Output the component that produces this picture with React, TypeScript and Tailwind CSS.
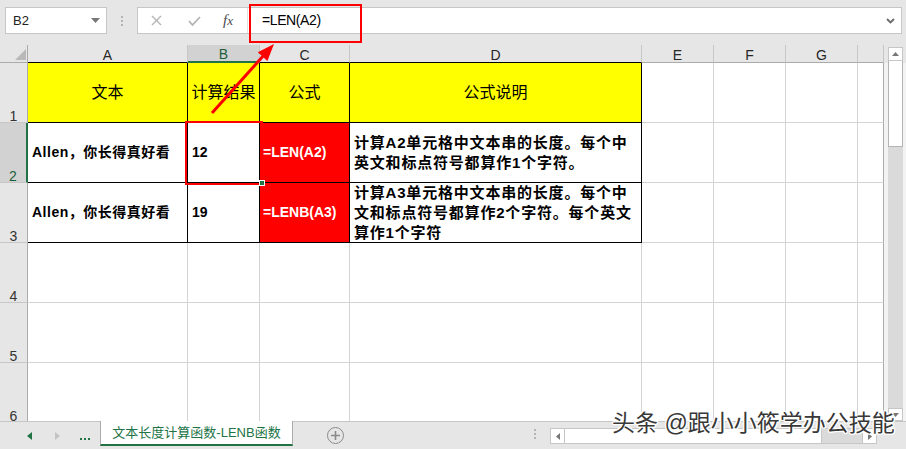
import React from 'react';

const base = "font-['Liberation_Sans','Noto_Sans_CJK_SC',sans-serif]";
const grid = 'border-r border-b border-[#d4d4d4]';
const blk = 'border-r border-b border-black';

function FormulaBar() {
  return (
    <div className="flex h-[45px] items-start pt-[7px] pl-[5px] pr-[4px]">
      {/* Name box */}
      <div className="flex h-[27px] w-[102px] items-center justify-between border border-[#c6c6c6] bg-white pl-[7px] pr-[6px]">
        <span className="text-[13px] text-[#222]">B2</span>
        <svg width="9" height="5" viewBox="0 0 9 5">
          <polygon points="0,0 9,0 4.5,5" fill="#777" />
        </svg>
      </div>
      {/* dots */}
      <div className="flex h-[27px] w-[30px] flex-col items-center justify-center gap-[2px]">
        <div className="h-[2px] w-[2px] bg-[#b4b4b4]" />
        <div className="h-[2px] w-[2px] bg-[#b4b4b4]" />
        <div className="h-[2px] w-[2px] bg-[#b4b4b4]" />
      </div>
      {/* Formula box */}
      <div className="flex h-[27px] flex-1 items-center border border-[#c6c6c6] bg-white">
        <div className="flex h-full w-[110px] items-center border-r border-[#e2e2e2]">
          <svg className="ml-[13px]" width="11" height="11" viewBox="0 0 11 11">
            <path d="M1 1 L10 10 M10 1 L1 10" stroke="#b4b4b4" strokeWidth="1.4" />
          </svg>
          <svg className="ml-[26px]" width="13" height="10" viewBox="0 0 13 10">
            <path d="M1 5 L4.5 9 L12 1" stroke="#b4b4b4" strokeWidth="1.8" fill="none" />
          </svg>
          <span className="ml-[22px] font-['Liberation_Serif',serif] text-[15px] italic text-[#4a4a4a]">
            f<span className="text-[13px]">x</span>
          </span>
        </div>
        <span className="ml-[14px] text-[14px] tracking-[-0.4px] text-black">=LEN(A2)</span>
        <div className="flex-1" />
        <svg className="mr-[6px]" width="9" height="6" viewBox="0 0 9 6">
          <path d="M1 1 L4.5 4.5 L8 1" stroke="#6a6a6a" strokeWidth="1.8" fill="none" />
        </svg>
      </div>
    </div>
  );
}

function Sheet() {
  const colHead = 'flex items-center justify-center bg-[#e6e6e6] pt-[3px] text-[14px] text-[#262626] border-r border-b border-r-[#c6c6c6]';
  const rowHead = 'flex items-end justify-center bg-[#e6e6e6] pb-[1px] text-[14px] leading-[10px] text-[#333] border-r border-b border-r-[#ababab] border-b-[#c6c6c6]';
  const empty = (n: number, last: boolean) =>
    Array.from({ length: n }).map((_, i) => (
      <div key={i} className={i === n - 1 && last ? 'border-r border-b border-[#d4d4d4] border-r-[#ababab]' : grid} />
    ));
  return (
    <div className="h-[376px] w-[884px] overflow-hidden">
      <div className="grid grid-cols-[28px_160px_72px_90px_292px_72px_72px_72px_26px] grid-rows-[18px_60px_60px_60px_60px_60px_60px] bg-white">
        {/* column headers */}
        <div className="relative border-r border-b border-[#ababab] bg-[#e6e6e6]">
          <svg className="absolute left-[15px] top-[4px]" width="11" height="11" viewBox="0 0 11 11">
            <polygon points="11,0 11,11 0,11" fill="#b9b9b9" />
          </svg>
        </div>
        <div className={`${colHead} border-b-black`}>A</div>
        <div className="flex items-center justify-center border-r border-r-[#c6c6c6] border-b-2 border-b-[#217346] bg-[#d2d2d2] pt-[3px] text-[14px] text-[#1d5e3a]">B</div>
        <div className={`${colHead} border-b-black`}>C</div>
        <div className={`${colHead} border-b-black`}>D</div>
        <div className={`${colHead} border-b-[#ababab]`}>E</div>
        <div className={`${colHead} border-b-[#ababab]`}>F</div>
        <div className={`${colHead} border-b-[#ababab]`}>G</div>
        <div className={`${colHead} border-b-[#ababab]`} />

        {/* row 1 */}
        <div className={rowHead}>1</div>
        <div className={`${blk} flex items-center justify-center bg-[#ffff00] text-[16px]`}>文本</div>
        <div className={`${blk} flex items-center justify-center whitespace-nowrap bg-[#ffff00] text-[16px]`}>计算结果</div>
        <div className={`${blk} flex items-center justify-center bg-[#ffff00] text-[16px]`}>公式</div>
        <div className={`${blk} flex items-center justify-center bg-[#ffff00] text-[16px]`}>公式说明</div>
        {empty(4, true)}

        {/* row 2 */}
        <div className="flex items-end justify-center border-r-2 border-b border-r-[#217346] border-b-[#c6c6c6] bg-[#d2d2d2] pb-[1px] text-[14px] leading-[10px] text-[#1d5e3a]">2</div>
        <div className={`${blk} flex items-center whitespace-nowrap pl-[4px] text-[14px] font-bold tracking-[0.5px]`}>Allen，你长得真好看</div>
        <div className={`${blk} flex items-center pl-[4px] text-[14px] font-bold`}>12</div>
        <div className={`${blk} flex items-center bg-[#ff0000] pl-[3px] text-[14px] font-bold text-white`}>=LEN(A2)</div>
        <div className={`${blk} flex items-center pl-[4px]`}>
          <p className="w-[284px] text-[15px] leading-[20px] font-bold tracking-[0.8px]">
            计算A2单元格中文本串的长度。每个中英文和标点符号都算作1个字符。
          </p>
        </div>
        {empty(4, true)}

        {/* row 3 */}
        <div className={rowHead}>3</div>
        <div className={`${blk} flex items-center whitespace-nowrap pl-[4px] text-[14px] font-bold tracking-[0.5px]`}>Allen，你长得真好看</div>
        <div className={`${blk} flex items-center pl-[4px] text-[14px] font-bold`}>19</div>
        <div className={`${blk} flex items-center bg-[#ff0000] pl-[3px] text-[14px] font-bold text-white`}>=LENB(A3)</div>
        <div className={`${blk} flex items-start pl-[4px]`}>
          <p className="w-[284px] text-[15px] leading-[20px] font-bold tracking-[0.8px]">
            计算A3单元格中文本串的长度。每个中文和标点符号都算作2个字符。每个英文算作1个字符
          </p>
        </div>
        {empty(4, true)}

        {/* rows 4-6 */}
        {['4', '5', '6'].map((n) => (
          <React.Fragment key={n}>
            <div className={rowHead}>{n}</div>
            {empty(8, true)}
          </React.Fragment>
        ))}
      </div>
    </div>
  );
}

function VScroll() {
  return (
    <div className="flex h-[376px] w-[22px] flex-col">
      <div className="h-[18px] bg-[#e6e6e6]" />
      <div className="flex flex-1 bg-[#f3f3f3] pl-[4px] pr-[3px]">
        <div className="-mt-[16px] flex w-[15px] flex-col">
          <div className="flex h-[14px] items-center justify-center border border-[#c6c6c6] bg-white">
            <svg width="7" height="4" viewBox="0 0 7 4"><polygon points="0,4 7,4 3.5,0" fill="#777" /></svg>
          </div>
          <div className="h-[86px] border border-t-0 border-[#b4b4b4] bg-white" />
          <div className="flex-1 bg-[#dadada]" />
          <div className="flex h-[13px] items-center justify-center border border-[#c6c6c6] bg-white">
            <svg width="7" height="4" viewBox="0 0 7 4"><polygon points="0,0 7,0 3.5,4" fill="#777" /></svg>
          </div>
        </div>
      </div>
    </div>
  );
}

function SheetTabs() {
  return (
    <div className="flex h-[28px] items-start border-t border-[#c6c6c6]">
      <div className="flex h-[27px] items-center pl-[15px]">
        <div className="flex w-[28px] justify-center">
          <svg width="5" height="8" viewBox="0 0 5 8"><polygon points="5,0 5,8 0,4" fill="#217346" /></svg>
        </div>
        <div className="flex w-[28px] justify-center">
          <svg width="5" height="8" viewBox="0 0 5 8"><polygon points="0,0 0,8 5,4" fill="#c3c3c3" /></svg>
        </div>
        <div className="flex w-[28px] justify-center gap-[2px] pt-[6px]">
          <div className="h-[2px] w-[2px] bg-[#217346]" />
          <div className="h-[2px] w-[2px] bg-[#217346]" />
          <div className="h-[2px] w-[2px] bg-[#217346]" />
        </div>
      </div>
      <div className="-mt-px ml-px flex h-[25px] w-[193px] items-center justify-center border-x border-b-2 border-x-[#ababab] border-b-[#217346] bg-white text-[13px] text-[#217346]">
        文本长度计算函数-LENB函数
      </div>
      <div className="ml-[34px] mt-[5px] flex h-[17px] w-[17px] items-center justify-center rounded-full border-[1.5px] border-[#8a8a8a]">
        <svg width="9" height="9" viewBox="0 0 9 9"><path d="M4.5 0 V9 M0 4.5 H9" stroke="#8a8a8a" strokeWidth="1.6" /></svg>
      </div>
      <div className="ml-[190px] mt-[7px] flex flex-col gap-[2px]">
        <div className="h-[2px] w-[2px] bg-[#b4b4b4]" />
        <div className="h-[2px] w-[2px] bg-[#b4b4b4]" />
        <div className="h-[2px] w-[2px] bg-[#b4b4b4]" />
      </div>
      <div className="ml-[14px] mt-[6px] flex h-[16px] w-[327px] border border-[#c6c6c6] bg-[#dadada]">
        <div className="flex w-[14px] items-center justify-center border-r border-[#c6c6c6] bg-white">
          <svg width="4" height="7" viewBox="0 0 4 7"><polygon points="4,0 4,7 0,3.5" fill="#777" /></svg>
        </div>
        <div className="w-[257px] border-r border-[#c6c6c6] bg-white" />
        <div className="flex-1" />
        <div className="flex w-[14px] items-center justify-center border-l border-[#c6c6c6] bg-white">
          <svg width="4" height="7" viewBox="0 0 4 7"><polygon points="0,0 0,7 4,3.5" fill="#777" /></svg>
        </div>
      </div>
    </div>
  );
}

function Overlays() {
  return (
    <>
      {/* red box around formula */}
      <div className="pointer-events-none absolute left-[249px] top-[4px] h-[39px] w-[113px] border-2 border-[#ff0000]" />
      {/* red box around B2 */}
      <div className="pointer-events-none absolute left-[185px] top-[121px] h-[64px] w-[78px] border-2 border-[#ff0000]" />
      <div className="pointer-events-none absolute left-[259px] top-[180px] h-[6px] w-[6px] border border-white bg-[#217346]" />
      {/* arrow */}
      <svg className="pointer-events-none absolute left-0 top-0" width="906" height="449" viewBox="0 0 906 449">
        <line x1="212" y1="113" x2="264" y2="55" stroke="#ff0000" strokeWidth="3" />
        <polygon points="274,44 267.4,60.9 257.8,52.3" fill="#ff0000" />
      </svg>
      {/* watermark */}
      <div className="pointer-events-none absolute left-[612px] top-[410px] whitespace-nowrap text-[23px] leading-[26px] text-[#383838] [text-shadow:1px_1px_0_#fff,-1px_-1px_0_#fff,1px_-1px_0_#fff,-1px_1px_0_#fff,0_1px_0_#fff,0_-1px_0_#fff,1px_0_0_#fff,-1px_0_0_#fff,0_0_3px_#fff]">
        头条 @跟小小筱学办公技能
      </div>
    </>
  );
}

export default function App() {
  return (
    <div className={`relative h-[449px] w-[906px] overflow-hidden bg-[#e6e6e6] text-black ${base}`}>
      <FormulaBar />
      <div className="flex">
        <Sheet />
        <VScroll />
      </div>
      <SheetTabs />
      <Overlays />
    </div>
  );
}
